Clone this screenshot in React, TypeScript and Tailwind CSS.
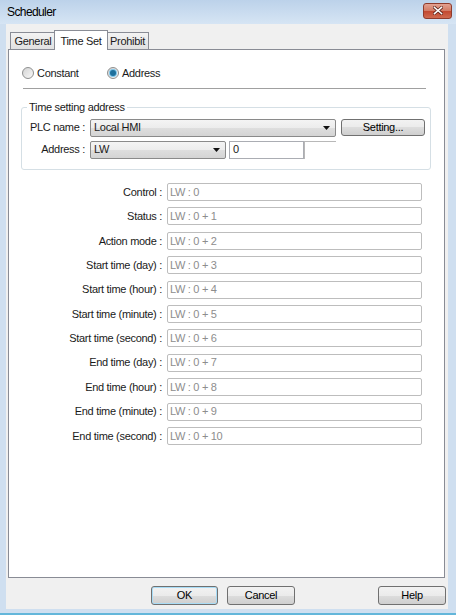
import React from 'react';

const rows: [string, string][] = [
  ['Control', 'LW : 0'],
  ['Status', 'LW : 0 + 1'],
  ['Action mode', 'LW : 0 + 2'],
  ['Start time (day)', 'LW : 0 + 3'],
  ['Start time (hour)', 'LW : 0 + 4'],
  ['Start time (minute)', 'LW : 0 + 5'],
  ['Start time (second)', 'LW : 0 + 6'],
  ['End time (day)', 'LW : 0 + 7'],
  ['End time (hour)', 'LW : 0 + 8'],
  ['End time (minute)', 'LW : 0 + 9'],
  ['End time (second)', 'LW : 0 + 10'],
];

const btn =
  'flex items-center justify-center rounded-[3px] border border-[#707070] bg-[linear-gradient(#f2f2f2,#ebebeb_50%,#dddddd_50%,#cfcfcf)] text-black';

function Radio({ checked, label }: { checked?: boolean; label: string }) {
  return (
    <div className="flex items-center gap-[3px]">
      <div className="flex h-[12px] w-[12px] items-center justify-center rounded-full border border-[#8e8f8f] bg-linear-to-br from-[#d4d4d4] to-[#f8f8f8]">
        {checked && <div className="h-[6px] w-[6px] rounded-full bg-[#1d6f9c] shadow-[0_0_0_1px_#7ec6ea]" />}
      </div>
      <span>{label}</span>
    </div>
  );
}

function Combo({ text, w }: { text: string; w: string }) {
  return (
    <div className={`${w} flex h-[18px] items-center justify-between rounded-[2px] border border-[#8a8a8a] bg-[linear-gradient(#f4f4f4,#ececec_50%,#dedede_50%,#d4d4d4)] pl-[3px] pr-[5px]`}>
      <span>{text}</span>
      <svg width="7" height="4" viewBox="0 0 7 4">
        <path d="M0 0h7L3.5 4z" fill="#111" />
      </svg>
    </div>
  );
}

export default function App() {
  return (
    <div className='flex h-[615px] w-[456px] flex-col bg-[#cfdff0] font-["Liberation_Sans",Arial,sans-serif] text-[11px] tracking-[-0.3px] text-[#1a1a1a]'>
      {/* title bar */}
      <div className="flex h-[24px] items-center justify-between bg-linear-to-b from-[#bcd2ea] to-[#d6e5f4] pl-[7px] pr-[4px]">
        <span className="text-[12px] tracking-[-0.6px] text-black">Scheduler</span>
        <div className="mb-[3px] flex h-[16px] w-[29px] items-center justify-center rounded-[3px] border border-[#8f3b2c] bg-[linear-gradient(#e3a191,#d17a63_50%,#c2472f_50%,#cf6a4f)]">
          <svg width="10" height="9" viewBox="0 0 10 9">
            <path d="M1.5 1.5l7 6M8.5 1.5l-7 6" stroke="#5b2218" strokeWidth="3" strokeLinecap="square" />
            <path d="M1.5 1.5l7 6M8.5 1.5l-7 6" stroke="#fff" strokeWidth="1.6" strokeLinecap="square" />
          </svg>
        </div>
      </div>

      {/* client area */}
      <div className="ml-[6px] mr-[8px] flex h-[585px] flex-col bg-[#f0f0f0] pt-[6px]">
        {/* tabs */}
        <div className="ml-[4px] flex h-[19px] items-end">
          <div className="flex h-[17px] w-[46px] items-center justify-center border border-b-0 border-[#898c95] bg-linear-to-b from-[#f3f3f3] to-[#e1e1e1]">
            General
          </div>
          <div className="relative z-10 -ml-[2px] -mb-px flex h-[20px] w-[54px] items-start justify-center border border-b-0 border-[#898c95] bg-white pt-[2px]">
            Time Set
          </div>
          <div className="-ml-[2px] flex h-[17px] w-[43px] items-center justify-center border border-b-0 border-[#898c95] bg-linear-to-b from-[#f3f3f3] to-[#e1e1e1]">
            Prohibit
          </div>
        </div>

        {/* panel */}
        <div className="ml-[2px] mr-[3px] flex h-[529px] flex-col border border-[#898c95] bg-white pl-[12px] pr-[13px] pt-[15px]">
          <div className="flex h-[16px] items-center pl-[1px]">
            <div className="w-[85px]">
              <Radio label="Constant" />
            </div>
            <Radio checked label="Address" />
          </div>
          <div className="ml-[2px] mt-[7px] h-px w-[403px] bg-[#a0a0a0]" />

          <fieldset className="mt-[10px] h-[71px] w-[410px] rounded-[3px] border border-[#d5dfe5] pb-[8px]">
            <legend className="ml-[5px] px-[2px]">Time setting address</legend>
            <div className="mt-[3px] flex items-center">
              <span className="w-[63px] text-right">PLC name :</span>
              <div className="ml-[5px]">
                <Combo text="Local HMI" w="w-[246px]" />
              </div>
              <div className={`${btn} ml-[5px] h-[17px] w-[84px]`}>Setting...</div>
            </div>
            <div className="mt-[4px] flex items-center">
              <span className="w-[63px] text-right">Address :</span>
              <div className="ml-[5px]">
                <Combo text="LW" w="w-[136px]" />
              </div>
              <div className="ml-[3px] flex h-[18px] w-[75px] items-center border border-[#abadb3] bg-white pl-[3px]">0</div>
              <div className="h-[18px] w-[32px] border-l border-t border-[#b8b8b8]" />
            </div>
          </fieldset>

          {/* address rows */}
          <div className="mt-[13px] flex flex-col gap-y-[6.4px]">
            {rows.map(([label, value]) => (
              <div key={label} className="flex h-[18px] items-center">
                <span className="w-[141px] text-right">{label} :</span>
                <div className="ml-[5px] flex h-[18px] w-[255px] items-center rounded-[2px] border border-[#bdbdbd] bg-white pl-[2px] text-[#8d8d8d]">
                  {value}
                </div>
              </div>
            ))}
          </div>
        </div>

        {/* buttons */}
        <div className="mt-[8px] flex h-[19px] pl-[145px]">
          <div className={`${btn} h-[19px] w-[67px] border-[#3c7fb1] shadow-[inset_0_0_0_1px_#a8dcf6]`}>OK</div>
          <div className={`${btn} ml-[9px] h-[19px] w-[68px]`}>Cancel</div>
          <div className={`${btn} ml-[83px] h-[19px] w-[68px]`}>Help</div>
        </div>
      </div>
      <div className="mt-auto h-[2px] bg-[#63b6da]" />
    </div>
  );
}
